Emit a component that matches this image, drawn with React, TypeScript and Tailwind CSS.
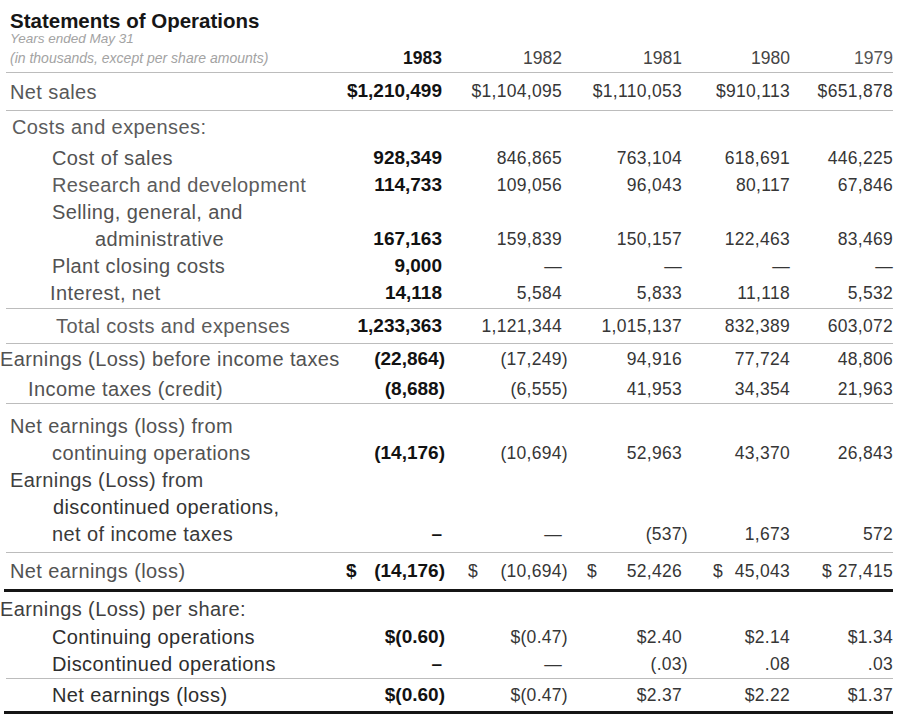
import React from "react";

type Dollar = { d: true; v: string };
type CellV = string | Dollar | null;

const GRID = "grid grid-cols-[340px_102px_120px_120px_108px_103px]";
const DPL = ["pl-[6px]", "pl-[26px]", "pl-[25px]", "pl-[31px]", "pl-[32px]"];

const REG = "text-[17.5px] text-[#363636] tracking-[0.3px]";
const BOLD = "text-[19px] font-bold text-[#121212]";

function Cell({ v, i }: { v: CellV; i: number }) {
  if (v === null) return <div />;
  const txt = typeof v === "string" ? v : v.v;
  const hang = txt.endsWith(")") ? (i === 0 ? "mr-[-3px]" : "mr-[-6px]") : "";
  const font = i === 0 ? BOLD : REG;
  if (typeof v !== "string") {
    return (
      <div className={`flex justify-between whitespace-nowrap ${DPL[i]} ${hang} ${font}`}>
        <span>$</span>
        <span>{v.v}</span>
      </div>
    );
  }
  return <div className={`text-right whitespace-nowrap ${hang} ${font}`}>{v}</div>;
}

function Row({
  label,
  ind,
  h,
  vals,
  lc = "text-[#525252]",
}: {
  label: string;
  ind: string;
  h: string;
  vals: CellV[];
  lc?: string;
}) {
  return (
    <div className={`${GRID} items-center ${h}`}>
      <div className={`whitespace-nowrap text-[20px] tracking-[0.4px] ${lc} ${ind}`}>{label}</div>
      {vals.map((v, i) => (
        <Cell key={i} v={v} i={i} />
      ))}
    </div>
  );
}

const Thin = () => <div className="ml-[6px] h-px bg-[#bcbcbc]" />;
const Thick = () => <div className="ml-[4px] h-[3px] bg-[#151515]" />;
const E: CellV[] = [null, null, null, null, null];
const D = (v: string): Dollar => ({ d: true, v });

export default function App() {
  return (
    <div className="w-[909px] h-[716px] bg-white overflow-hidden font-['Liberation_Sans',Arial,sans-serif]">
      <div className="w-[893px]">
        <div className="pt-[11px] pl-[10px] leading-[20px] h-[33px] text-[20.5px] font-bold text-[#161616] whitespace-nowrap">
          Statements of Operations
        </div>
        <div className="pl-[10px] h-[12px] leading-[12px] text-[13.5px] italic text-[#a3a3a3] whitespace-nowrap">
          Years ended May 31
        </div>
        <div className={`${GRID} items-center h-[16px]`}>
          <div className="pl-[10px] whitespace-nowrap text-[14px] leading-[14px] italic text-[#a3a3a3]">
            (in thousands, except per share amounts)
          </div>
          <div className="text-right text-[17.5px] font-bold text-[#141414]">1983</div>
          <div className="text-right text-[17.5px] text-[#444]">1982</div>
          <div className="text-right text-[17.5px] text-[#444]">1981</div>
          <div className="text-right text-[17.5px] text-[#444]">1980</div>
          <div className="text-right text-[17.5px] text-[#555]">1979</div>
        </div>
        <div className="h-[11px]" />
        <Thin />
        <Row
          label="Net sales"
          ind="pl-[10px]"
          h="h-[37px]"
          lc="text-[#585858]"
          vals={["$1,210,499", "$1,104,095", "$1,110,053", "$910,113", "$651,878"]}
        />
        <Thin />
        <Row label="Costs and expenses:" ind="pl-[12px]" h="h-[32px]" lc="text-[#5c5c5c]" vals={E} />
        <Row label="Cost of sales" ind="pl-[52px]" h="h-[27px]" vals={["928,349", "846,865", "763,104", "618,691", "446,225"]} />
        <Row label="Research and development" ind="pl-[52px]" h="h-[27px]" lc="text-[#5c5c5c]" vals={["114,733", "109,056", "96,043", "80,117", "67,846"]} />
        <Row label="Selling, general, and" ind="pl-[52px]" h="h-[27px]" vals={E} />
        <Row label="administrative" ind="pl-[95px]" h="h-[27px]" vals={["167,163", "159,839", "150,157", "122,463", "83,469"]} />
        <Row label="Plant closing costs" ind="pl-[52px]" h="h-[27px]" vals={["9,000", "—", "—", "—", "—"]} />
        <Row label="Interest, net" ind="pl-[50px]" h="h-[27px]" vals={["14,118", "5,584", "5,833", "11,118", "5,532"]} />
        <div className="h-[3px]" />
        <Thin />
        <Row label="Total costs and expenses" ind="pl-[56px]" h="h-[34px]" lc="text-[#5c5c5c]" vals={["1,233,363", "1,121,344", "1,015,137", "832,389", "603,072"]} />
        <Thin />
        <Row label="Earnings (Loss) before income taxes" ind="pl-0" h="h-[30px]" vals={["(22,864)", "(17,249)", "94,916", "77,724", "48,806"]} />
        <Row label="Income taxes (credit)" ind="pl-[28px]" h="h-[25px]" vals={["(8,688)", "(6,555)", "41,953", "34,354", "21,963"]} />
        <div className="h-[4px]" />
        <Thin />
        <div className="h-[7px]" />
        <Row label="Net earnings (loss) from" ind="pl-[10px]" h="h-[27px]" vals={E} />
        <Row label="continuing operations" ind="pl-[52px]" h="h-[27px]" vals={["(14,176)", "(10,694)", "52,963", "43,370", "26,843"]} />
        <Row label="Earnings (Loss) from" ind="pl-[10px]" h="h-[27px]" lc="text-[#3e3e3e]" vals={E} />
        <Row label="discontinued operations," ind="pl-[53px]" h="h-[27px]" lc="text-[#333]" vals={E} />
        <Row label="net of income taxes" ind="pl-[52px]" h="h-[27px]" lc="text-[#3a3a3a]" vals={["–", "—", "(537)", "1,673", "572"]} />
        <div className="h-[6px]" />
        <Thin />
        <Row
          label="Net earnings (loss)"
          ind="pl-[10px]"
          h="h-[36px]"
          vals={[D("(14,176)"), D("(10,694)"), D("52,426"), D("45,043"), D("27,415")]}
        />
        <Thick />
        <div className="h-[2px]" />
        <Row label="Earnings (Loss) per share:" ind="pl-0" h="h-[28px]" lc="text-[#404040]" vals={E} />
        <Row label="Continuing operations" ind="pl-[52px]" h="h-[27px]" lc="text-[#2e2e2e]" vals={["$(0.60)", "$(0.47)", "$2.40", "$2.14", "$1.34"]} />
        <Row label="Discontinued operations" ind="pl-[52px]" h="h-[27px]" lc="text-[#2e2e2e]" vals={["–", "—", "(.03)", ".08", ".03"]} />
        <div className="h-[2px]" />
        <Thin />
        <Row label="Net earnings (loss)" ind="pl-[52px]" h="h-[32px]" lc="text-[#2e2e2e]" vals={["$(0.60)", "$(0.47)", "$2.37", "$2.22", "$1.37"]} />
        <Thick />
      </div>
    </div>
  );
}
